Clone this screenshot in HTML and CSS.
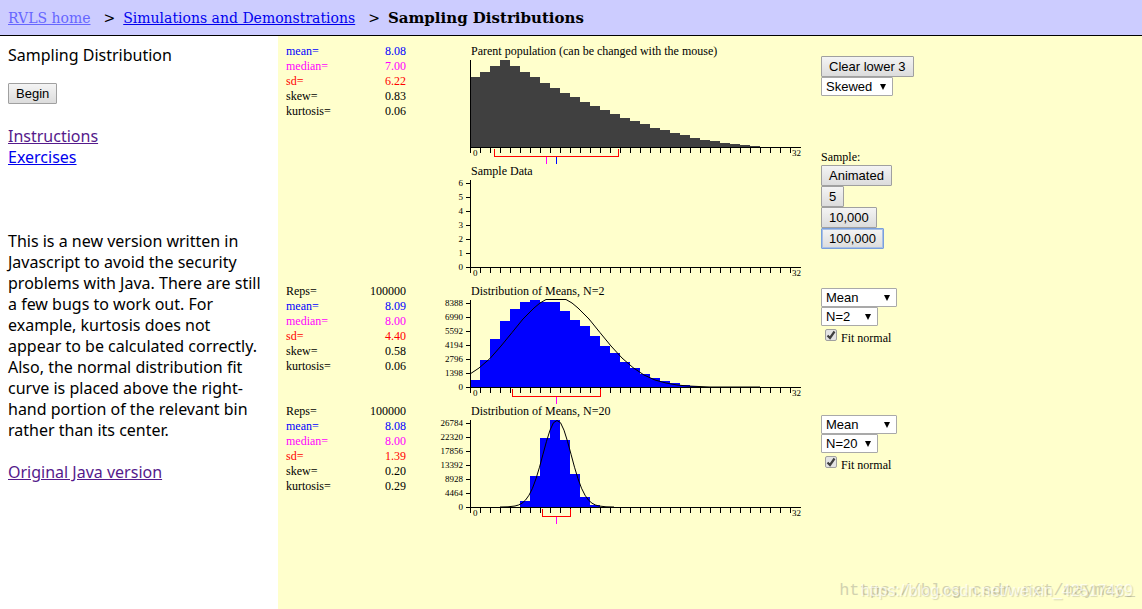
FILE: index.html
```html
<!DOCTYPE html>
<html lang="en">
<head>
<meta charset="utf-8">
<title>Sampling Distributions</title>
<link rel="stylesheet" href="styles.css">
</head>
<body>
<nav class="crumbs">
  <a class="crumb-visited" href="#home">RVLS home</a>
  <span class="sep">&gt;</span>
  <a href="#demos">Simulations and Demonstrations</a>
  <span class="sep">&gt;</span>
  <strong class="current">Sampling Distributions</strong>
</nav>
<div class="layout">
  <aside class="sidebar">
    <div>Sampling Distribution</div>
    <button class="btn begin" type="button">Begin</button>
    <div class="links">
      <a class="visited" href="#instructions">Instructions</a>
      <a href="#exercises">Exercises</a>
    </div>
    <p class="note">This is a new version written in Javascript to avoid the security problems with Java. There are still a few bugs to work out. For example, kurtosis does not appear to be calculated correctly. Also, the normal distribution fit curve is placed above the right-hand portion of the relevant bin rather than its center.</p>
    <a class="visited" href="#java">Original Java version</a>
  </aside>

  <main class="panel">
    <div class="plots">
      <section class="plot">
        <table class="stats">
          <tr class="mean"><th>mean=</th><td>8.08</td></tr>
          <tr class="median"><th>median=</th><td>7.00</td></tr>
          <tr class="sd"><th>sd=</th><td>6.22</td></tr>
          <tr><th>skew=</th><td>0.83</td></tr>
          <tr><th>kurtosis=</th><td>0.06</td></tr>
        </table>
        <svg class="chart" width="380" height="120" viewBox="0 0 380 120">
          <text class="title" x="41" y="15">Parent population (can be changed with the mouse)</text>
          <path class="bars-dark" d="M40 107V37h10V32h10V26h10V20h10V26h10V32h10V37h10V43h10V48h10V53h10V57h10V62h10V66h10V70h10V74h10V78h10V81h10V84h10V88h10V90h10V93h10V95h10V98h10V100h10V101h10V103h10V104h10V105h10V106h10V107z"/>
          <path class="axis" d="M40.5 20V113M40 107.500H371"/>
          <path class="ticks" d="M40 110.500H361"/>
          <text x="43" y="116">0</text><text x="362" y="116">32</text>
          <path class="spread" d="M64.500 109V116.500H188.500V109"/>
          <path class="mark-median" d="M116.500 117V124"/>
          <path class="mark-mean" d="M126.500 117V124"/>
        </svg>
      </section>

      <section class="plot">
        <div class="stats"></div>
        <svg class="chart" width="380" height="120" viewBox="0 0 380 120">
          <text class="title" x="41" y="15">Sample Data</text>
          <path class="axis" d="M40.500 20V113M40 107.500H371M36 23.500h4M36 37.500h4M36 51.500h4M36 65.500h4M36 79.500h4M36 93.500h4M36 107.500h4"/>
          <path class="ticks" d="M40 110.500H361"/>
          <g class="y-labels"><text x="33" y="26">6</text><text x="33" y="40">5</text><text x="33" y="54">4</text><text x="33" y="68">3</text><text x="33" y="82">2</text><text x="33" y="96">1</text><text x="33" y="110">0</text></g>
          <text x="43" y="116">0</text><text x="362" y="116">32</text>
        </svg>
      </section>

      <section class="plot">
        <table class="stats">
          <tr><th>Reps=</th><td>100000</td></tr>
          <tr class="mean"><th>mean=</th><td>8.09</td></tr>
          <tr class="median"><th>median=</th><td>8.00</td></tr>
          <tr class="sd"><th>sd=</th><td>4.40</td></tr>
          <tr><th>skew=</th><td>0.58</td></tr>
          <tr><th>kurtosis=</th><td>0.06</td></tr>
        </table>
        <svg class="chart" width="380" height="120" viewBox="0 0 380 120">
          <text class="title" x="41" y="15">Distribution of Means, N=2</text>
          <path class="bars-blue" d="M40 107V100h10V80h10V59h10V41h10V29h10V22h10V20h10V22h20V31h10V40h10V46h10V56h10V66h10V73h10V82h10V88h10V94h10V98h10V101h10V103h10V105h10V106h10V107z"/>
          <path class="axis" d="M40.500 20V113M40 107.500H371M36 23.500h4M36 37.500h4M36 51.500h4M36 65.500h4M36 79.500h4M36 93.500h4M36 107.500h4"/>
          <path class="ticks" d="M40 110.500H361"/>
          <path class="fit" d="M40 94L49 88L60 78.500L71 66L82 52.600L93 39L104 28L110 23L116 19.500H136L142 23L148 28L159 39L170 52.600L181 66L192 78L203 87.600L214 95L225 100L236 103L247 105L258 106L280 107H330"/>
          <g class="y-labels"><text x="33" y="26">8388</text><text x="33" y="40">6990</text><text x="33" y="54">5592</text><text x="33" y="68">4194</text><text x="33" y="82">2796</text><text x="33" y="96">1398</text><text x="33" y="110">0</text></g>
          <text x="43" y="116">0</text><text x="362" y="116">32</text>
          <path class="spread" d="M82.500 109V116.500H170.500V109"/>
          <path class="mark-median" d="M126.500 117V124"/>
        </svg>
      </section>

      <section class="plot">
        <table class="stats">
          <tr><th>Reps=</th><td>100000</td></tr>
          <tr class="mean"><th>mean=</th><td>8.08</td></tr>
          <tr class="median"><th>median=</th><td>8.00</td></tr>
          <tr class="sd"><th>sd=</th><td>1.39</td></tr>
          <tr><th>skew=</th><td>0.20</td></tr>
          <tr><th>kurtosis=</th><td>0.29</td></tr>
        </table>
        <svg class="chart" width="380" height="120" viewBox="0 0 380 120">
          <text class="title" x="41" y="15">Distribution of Means, N=20</text>
          <path class="bars-blue" d="M90 107V101h10V76h10V38h10V20h10V40h10V74h10V97h10V105h10V107z"/>
          <path class="axis" d="M40.500 20V113M40 107.500H371M36 23.500h4M36 37.500h4M36 51.500h4M36 65.500h4M36 79.500h4M36 93.500h4M36 107.500h4"/>
          <path class="ticks" d="M40 110.500H361"/>
          <path class="fit" d="M70 107L78 106.800L85 106L88.500 105L92 103.200L95.500 100.100L99 95.200L102.500 88.200L106 78.700L109.500 67.200L113 54.200L116.500 41.300L120 30.200L123.500 22.700L127 20.500L130.500 22.700L134 30.200L137.500 41.300L141 54.200L144.500 67.200L148 78.700L151.500 88.200L155 95.200L158.500 100.100L162 103.200L165.500 105L169 106L176 106.800L184 107"/>
          <g class="y-labels"><text x="33" y="26">26784</text><text x="33" y="40">22320</text><text x="33" y="54">17856</text><text x="33" y="68">13392</text><text x="33" y="82">8928</text><text x="33" y="96">4464</text><text x="33" y="110">0</text></g>
          <text x="43" y="116">0</text><text x="362" y="116">32</text>
          <path class="spread" d="M112.500 109V116.500H140.500V109"/>
          <path class="mark-median" d="M126.500 117V124"/>
        </svg>
      </section>
    </div>

    <form class="controls">
      <div class="group population">
        <button class="btn" type="button">Clear lower 3</button>
        <select class="select select-shape" aria-label="Population shape"><option>Skewed</option></select>
      </div>
      <div class="group sampling">
        <span>Sample:</span>
        <button class="btn" type="button">Animated</button>
        <button class="btn" type="button">5</button>
        <button class="btn" type="button">10,000</button>
        <button class="btn btn-active" type="button">100,000</button>
      </div>
      <div class="group first-means">
        <select class="select select-stat" aria-label="First statistic"><option>Mean</option></select>
        <select class="select select-size" aria-label="First sample size"><option>N=2</option></select>
        <label class="fit-option"><input class="tick" type="checkbox" checked>Fit normal</label>
      </div>
      <div class="group">
        <select class="select select-stat" aria-label="Second statistic"><option>Mean</option></select>
        <select class="select select-size" aria-label="Second sample size"><option>N=20</option></select>
        <label class="fit-option"><input class="tick" type="checkbox" checked>Fit normal</label>
      </div>
    </form>
  </main>
</div>
<div class="watermark watermark-mono">https://blog.csdn.net/maymay_</div>
<div class="watermark watermark-sans">https://blog.csdn.net/weixin_42517469</div>
</body>
</html>
```
FILE: styles.css
```css
* { box-sizing: border-box; }

body {
  margin: 0;
  min-height: 100vh;
  position: relative;
  display: flex;
  flex-direction: column;
  font: 16px/21px "Noto Sans", sans-serif;
  color: #000;
  background: #fff;
}

a { color: #00e; }
a.visited { color: #551a8b; }

.crumbs {
  display: flex;
  align-items: center;
  height: 36px;
  padding: 0 8px;
  border-bottom: 1px solid #000;
  background: #ccf;
  font: 14px/20px "DejaVu Serif", serif;
}
.crumbs .crumb-visited { color: #66f; }
.current { font-size: 15px; }
.sep { margin: 0 8px 0 13px; }

.layout { flex: 1; display: flex; }

.sidebar {
  width: 278px;
  flex: none;
  padding: 9px 12px 9px 8px;
}
.begin { margin: 17px 0 22px; }
.links { display: flex; flex-direction: column; align-items: flex-start; }
.note { margin: 63px 0 21px; }

.panel {
  flex: 1;
  display: flex;
  align-items: flex-start;
  padding: 4px 8px;
  background: #ffc;
  font: 12px/15px "Liberation Serif", serif;
}

.plot { display: flex; gap: 24px; }
.stats { width: 120px; margin-top: 4px; border-spacing: 0; align-self: flex-start; }
.stats th { padding: 0; text-align: left; font-weight: normal; }
.stats td { padding: 0; text-align: right; }
.mean { color: #00f; }
.median { color: #f0f; }
.sd { color: #f00; }

.chart { display: block; overflow: visible; font-size: 9px; }
.chart .title { font-size: 12px; }
.chart path { fill: none; shape-rendering: crispEdges; }
.chart .bars-dark { fill: #404040; }
.chart .bars-blue { fill: #00f; }
.axis { stroke: #000; }
.ticks { stroke: #000; stroke-width: 5; stroke-dasharray: 1 9; }
.chart .fit { stroke: #000; shape-rendering: auto; }
.spread { stroke: #f00; }
.mark-median { stroke: #f0f; }
.mark-mean { stroke: #00f; }
.y-labels { text-anchor: end; }

.controls { margin-left: 11px; padding-top: 16px; }
.group { display: flex; flex-direction: column; align-items: flex-start; }
.population { margin-bottom: 54px; }
.sampling { margin-bottom: 39px; }
.first-means { margin-bottom: 73px; }

.btn {
  display: block;
  height: 21px;
  padding: 0 7px;
  border: 1px solid #a0a0a0;
  border-radius: 1px;
  background: linear-gradient(#f4f4f4, #dcdcdc);
  color: #000;
  font: 13px/17px "Liberation Sans", sans-serif;
}
.btn-active { border-color: #7a9fdc; box-shadow: inset 0 0 0 1px #a8c0e6; }

.select {
  appearance: none;
  height: 19px;
  padding: 0 4px;
  border: 1px solid #a9a9a9;
  border-radius: 1px;
  color: #000;
  font: 13px/17px "Liberation Sans", sans-serif;
  background: #fff url("data:image/svg+xml,%3Csvg xmlns='http://www.w3.org/2000/svg' width='6' height='6'%3E%3Cpath d='M0 0h6L3 6z'/%3E%3C/svg%3E") no-repeat right 6px center;
}
.select-shape { width: 72px; }
.select-stat { width: 76px; }
.select-size { width: 57px; }

.fit-option { display: flex; align-items: flex-start; gap: 4px; padding: 3px 0 0 4px; height: 16px; line-height: 18px; }
.tick {
  appearance: none;
  width: 12px;
  height: 12px;
  margin: 0;
  border: 1px solid #a0a0a0;
  border-radius: 2px;
  background: #e4e4e4 url("data:image/svg+xml,%3Csvg xmlns='http://www.w3.org/2000/svg' width='10' height='10'%3E%3Cpath d='M1.500 5.500l2.500 2.500L8.500 1.500' fill='none' stroke='%23404040' stroke-width='2.200'/%3E%3C/svg%3E") no-repeat center;
}

.watermark { position: absolute; bottom: 8px; white-space: nowrap; }
.watermark-mono { right: 7px; font: 17px/20px "Liberation Mono", monospace; color: #d2d2b0; }
.watermark-sans { right: 9px; font: 16px/20px "Liberation Sans", sans-serif; color: rgba(255, 255, 255, 0.7); text-shadow: 1px 1px 1px rgba(0, 0, 0, 0.15); }
```
